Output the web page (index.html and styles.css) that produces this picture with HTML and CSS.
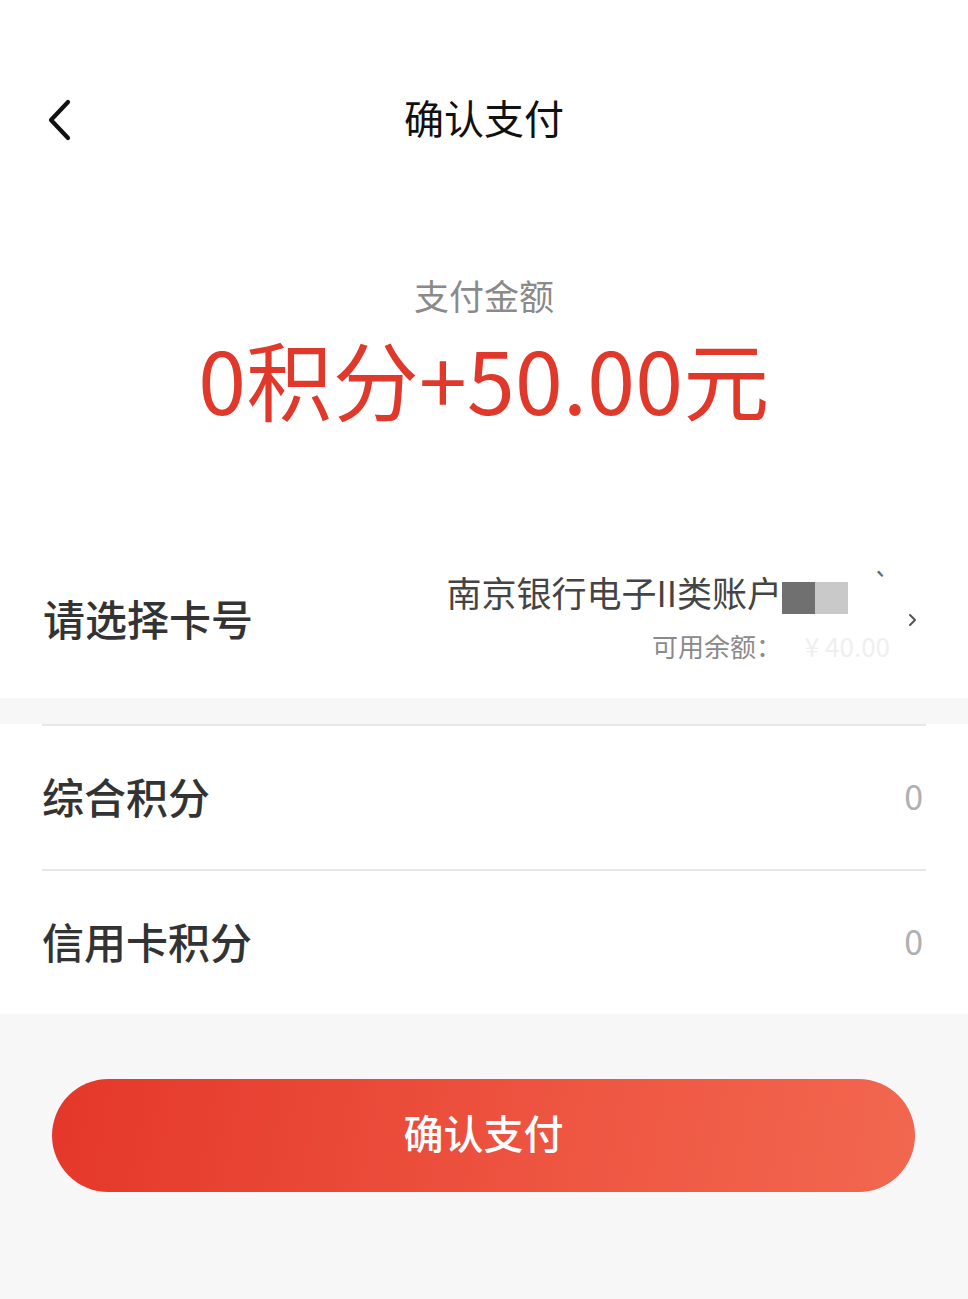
FILE: index.html
```html
<!DOCTYPE html>
<html lang="zh-CN">
<head>
<meta charset="utf-8">
<title>确认支付</title>
<link rel="stylesheet" href="styles.css">
</head>
<body>
<div class="page">
  <header class="nav">
    <span class="back">
      <svg width="26" height="42" viewBox="0 0 26 42"><path d="M22 3 L5 21 L22 39" fill="none" stroke="#111" stroke-width="4.2" stroke-linecap="round" stroke-linejoin="round"/></svg>
    </span>
    <h1 class="title">确认支付</h1>
  </header>

  <section class="amount">
    <div class="amount-label">支付金额</div>
    <div class="amount-value">0积分+50.00元</div>
  </section>

  <section class="card-row">
    <div class="label">请选择卡号</div>
    <div class="card-info">
      <div class="bank"><span>南京银行电子II类账户</span><span class="mask"><i class="m1"></i><i class="m2"></i></span><span class="faint">`</span></div>
      <div class="balance"><span>可用余额：</span><span class="faint-num">¥ 40.00</span></div>
    </div>
    <span class="arrow">
      <svg width="10" height="16" viewBox="0 0 10 16"><path d="M2 3 L7 8 L2 13" fill="none" stroke="#555" stroke-width="2" stroke-linecap="round" stroke-linejoin="round"/></svg>
    </span>
  </section>

  <div class="gap"></div>

  <section class="points">
    <div class="point-row"><span class="label">综合积分</span><span class="value">0</span></div>
    <div class="point-row"><span class="label">信用卡积分</span><span class="value">0</span></div>
  </section>

  <footer class="footer">
    <button class="pay-btn">确认支付</button>
  </footer>
</div>
</body>
</html>
```

FILE: styles.css
```css
html, body {
  margin: 0;
  padding: 0;
  background: #f7f7f7;
}
body {
  font-family: "Noto Sans CJK SC", "Noto Sans", sans-serif;
  color: #333;
}
.page {
  width: 968px;
  min-height: 1299px;
  display: flex;
  flex-direction: column;
  background: #f7f7f7;
}
.nav {
  height: 240px;
  background: #fff;
  display: flex;
  align-items: center;
  justify-content: center;
  position: relative;
}
.back {
  position: absolute;
  left: 46px;
  top: 99px;
  display: block;
  line-height: 0;
}
.title {
  margin: 0 0 6px;
  font-size: 40px;
  font-weight: 400;
  color: #111;
  line-height: 56px;
}
.amount {
  background: #fff;
  height: 302px;
  box-sizing: border-box;
  padding-top: 28px;
  display: flex;
  flex-direction: column;
  align-items: center;
}
.amount-label {
  font-size: 35px;
  line-height: 54px;
  color: #8a8a8a;
}
.amount-value {
  margin-top: 1px;
  font-size: 86px;
  line-height: 110px;
  color: #e0392c;
  letter-spacing: 0.3px;
}
.card-row {
  background: #fff;
  height: 156px;
  display: flex;
  align-items: center;
  padding: 0 50px 0 43px;
}
.label {
  font-size: 42px;
  font-weight: 500;
  color: #333;
  margin-top: -5px;
}
.card-info {
  margin-left: auto;
  display: flex;
  flex-direction: column;
  align-items: flex-end;
  gap: 14px;
}
.bank {
  display: flex;
  align-items: center;
  font-size: 35px;
  line-height: 44px;
  color: #444;
  margin-top: -6px;
}
.mask {
  display: flex;
  margin-left: 0;
  margin-top: 12px;
}
.mask i {
  display: block;
  width: 33px;
  height: 32px;
}
.m1 { background: #707070; }
.m2 { background: #c9c9c9; }
.faint {
  color: #666;
  width: 42px;
  text-align: right;
  font-size: 28px;
  margin-top: -18px;
}
.balance {
  font-size: 26px;
  line-height: 36px;
  color: #8a8a8a;
  display: flex;
}
.faint-num {
  color: #efefef;
  width: 108px;
  text-align: right;
}
.arrow {
  margin-left: 18px;
  line-height: 0;
}
.gap {
  height: 26px;
  background: #f7f7f7;
}
.points {
  background: #fff;
  padding: 0 42px 0 42px;
}
.point-row {
  height: 143px;
  border-top: 2px solid #e8e8e8;
  display: flex;
  align-items: center;
  justify-content: space-between;
}
.point-row .value {
  font-size: 34px;
  color: #b0b0b0;
  margin-right: 3px;
  margin-top: -5px;
}
.footer {
  flex: 1;
  background: #f7f7f7;
  padding: 65px 53px 0 52px;
}
.pay-btn {
  width: 100%;
  height: 113px;
  border: 0;
  border-radius: 57px;
  padding: 0 0 8px;
  background: linear-gradient(100deg, #e4372a 0%, #ee5642 60%, #f2674f 100%);
  color: #fff;
  font-family: "Noto Sans CJK SC", "Noto Sans", sans-serif;
  font-size: 40px;
  font-weight: 500;
  display: block;
}
```
